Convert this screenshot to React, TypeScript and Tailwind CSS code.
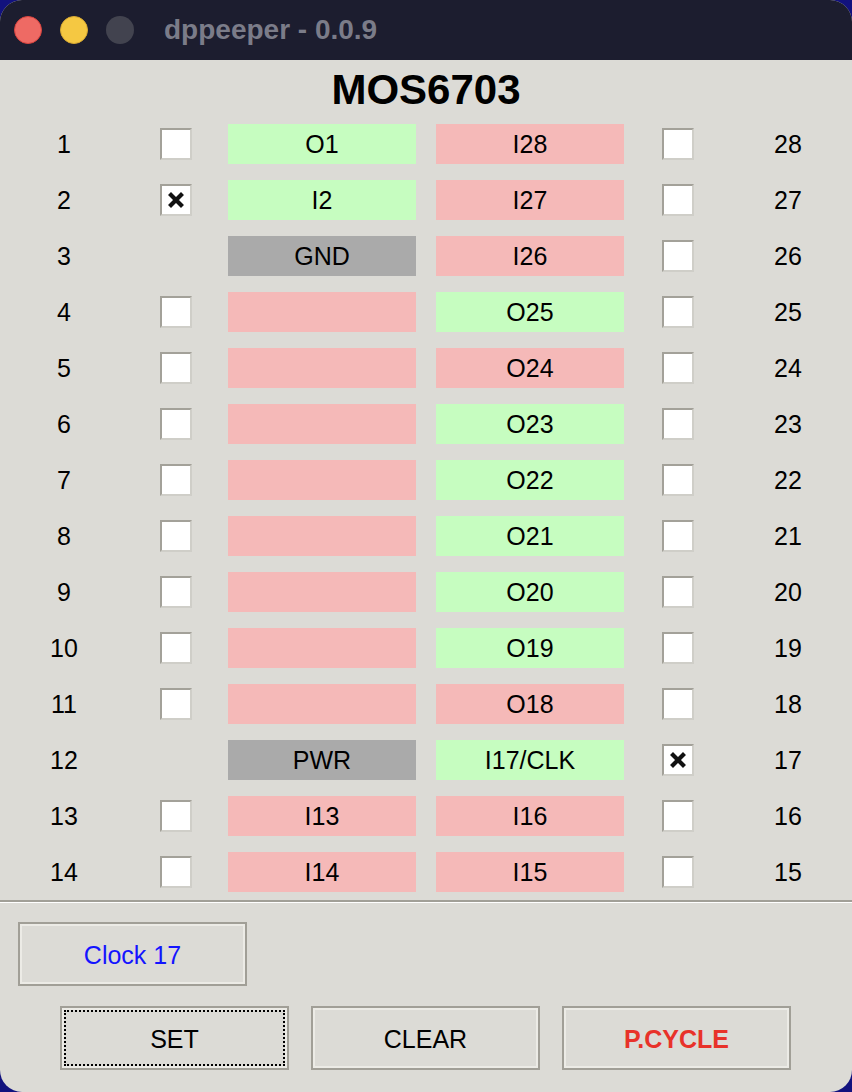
import React from "react";

type Pin = { n: number; label: string; color: "g" | "p" | "x"; cb: boolean; checked?: boolean };

const left: Pin[] = [
  { n: 1, label: "O1", color: "g", cb: true },
  { n: 2, label: "I2", color: "g", cb: true, checked: true },
  { n: 3, label: "GND", color: "x", cb: false },
  { n: 4, label: "", color: "p", cb: true },
  { n: 5, label: "", color: "p", cb: true },
  { n: 6, label: "", color: "p", cb: true },
  { n: 7, label: "", color: "p", cb: true },
  { n: 8, label: "", color: "p", cb: true },
  { n: 9, label: "", color: "p", cb: true },
  { n: 10, label: "", color: "p", cb: true },
  { n: 11, label: "", color: "p", cb: true },
  { n: 12, label: "PWR", color: "x", cb: false },
  { n: 13, label: "I13", color: "p", cb: true },
  { n: 14, label: "I14", color: "p", cb: true },
];

const right: Pin[] = [
  { n: 28, label: "I28", color: "p", cb: true },
  { n: 27, label: "I27", color: "p", cb: true },
  { n: 26, label: "I26", color: "p", cb: true },
  { n: 25, label: "O25", color: "g", cb: true },
  { n: 24, label: "O24", color: "p", cb: true },
  { n: 23, label: "O23", color: "g", cb: true },
  { n: 22, label: "O22", color: "g", cb: true },
  { n: 21, label: "O21", color: "g", cb: true },
  { n: 20, label: "O20", color: "g", cb: true },
  { n: 19, label: "O19", color: "g", cb: true },
  { n: 18, label: "O18", color: "p", cb: true },
  { n: 17, label: "I17/CLK", color: "g", cb: true, checked: true },
  { n: 16, label: "I16", color: "p", cb: true },
  { n: 15, label: "I15", color: "p", cb: true },
];

const bg = (c: Pin["color"]) =>
  c === "g" ? "bg-[#c6fdc0]" : c === "p" ? "bg-[#f5b9b8]" : "bg-[#aaaaaa]";

function Check({ show, checked }: { show: boolean; checked?: boolean }) {
  if (!show) return <div className="w-[32px] h-[32px] shrink-0" />;
  return (
    <div className="w-[32px] h-[32px] shrink-0 bg-white border-2 border-t-[#a3a199] border-l-[#a3a199] border-r-[#cfcec8] border-b-[#cfcec8] flex items-center justify-center">
      {checked && (
        <svg width="18" height="18" viewBox="0 0 18 18">
          <path d="M4 4 L14 14 M14 4 L4 14" stroke="#111" strokeWidth="4.2" strokeLinecap="square" />
        </svg>
      )}
    </div>
  );
}

function Box({ p }: { p: Pin }) {
  return (
    <div className={`w-[188px] h-[40px] shrink-0 flex items-center justify-center pt-[2px] ${bg(p.color)}`}>
      {p.label}
    </div>
  );
}

function Btn({ children, className = "", focus = false }: { children: React.ReactNode; className?: string; focus?: boolean }) {
  return (
    <div className={`w-[229px] h-[64px] border-2 border-[#a19f97] shadow-[inset_0_0_0_2px_#ecebe6] flex items-center justify-center relative pt-[4px] ${className}`}>
      {focus && <div className="absolute inset-[2px] border-2 border-dotted border-black" />}
      {children}
    </div>
  );
}

export default function App() {
  return (
    <div className="w-[852px] h-[1092px] bg-[#12127e] overflow-hidden" style={{ fontFamily: '"Liberation Sans", Arial, sans-serif' }}>
      <div className="w-[852px] h-[1092px] rounded-[22px] overflow-hidden bg-[#dcdbd6] flex flex-col">
        <div className="h-[60px] bg-[#1c1d2f] flex items-center shrink-0">
          <div className="ml-[14px] w-[28px] h-[28px] rounded-full bg-[#ee6a64] border border-[#d9443f]" />
          <div className="ml-[18px] w-[28px] h-[28px] rounded-full bg-[#f5c842] border border-[#d8a932]" />
          <div className="ml-[18px] w-[28px] h-[28px] rounded-full bg-[#42434f]" />
          <div className="ml-[30px] text-[28px] font-bold text-[#7b7c89] leading-none">dppeeper - 0.0.9</div>
        </div>
        <div className="h-[64px] flex items-center justify-center text-[42px] font-bold text-black leading-none pb-[4px]">
          MOS6703
        </div>
        <div className="flex flex-col gap-[16px] text-[25px] text-black">
          {left.map((l, i) => {
            const r = right[i];
            return (
              <div key={l.n} className="flex items-center h-[40px]">
                <div className="w-[128px] text-center pt-[2px]">{l.n}</div>
                <div className="ml-[32px]"><Check show={l.cb} checked={l.checked} /></div>
                <div className="ml-[36px]"><Box p={l} /></div>
                <div className="ml-[20px]"><Box p={r} /></div>
                <div className="ml-[38px]"><Check show={r.cb} checked={r.checked} /></div>
                <div className="ml-[54px] w-[80px] text-center pt-[2px]">{r.n}</div>
              </div>
            );
          })}
        </div>
        <div className="mt-[8px] h-[2px] bg-[#a19f97]" />
        <div className="h-[1px] bg-white" />
        <div className="pl-[18px] pt-[19px] text-[25px]">
          <Btn className="text-[#1414ff]">Clock 17</Btn>
        </div>
        <div className="flex pl-[60px] pt-[20px] gap-[22px] text-[25px] text-black">
          <Btn focus>SET</Btn>
          <Btn>CLEAR</Btn>
          <Btn className="text-[#e8322a] font-bold">P.CYCLE</Btn>
        </div>
      </div>
    </div>
  );
}
